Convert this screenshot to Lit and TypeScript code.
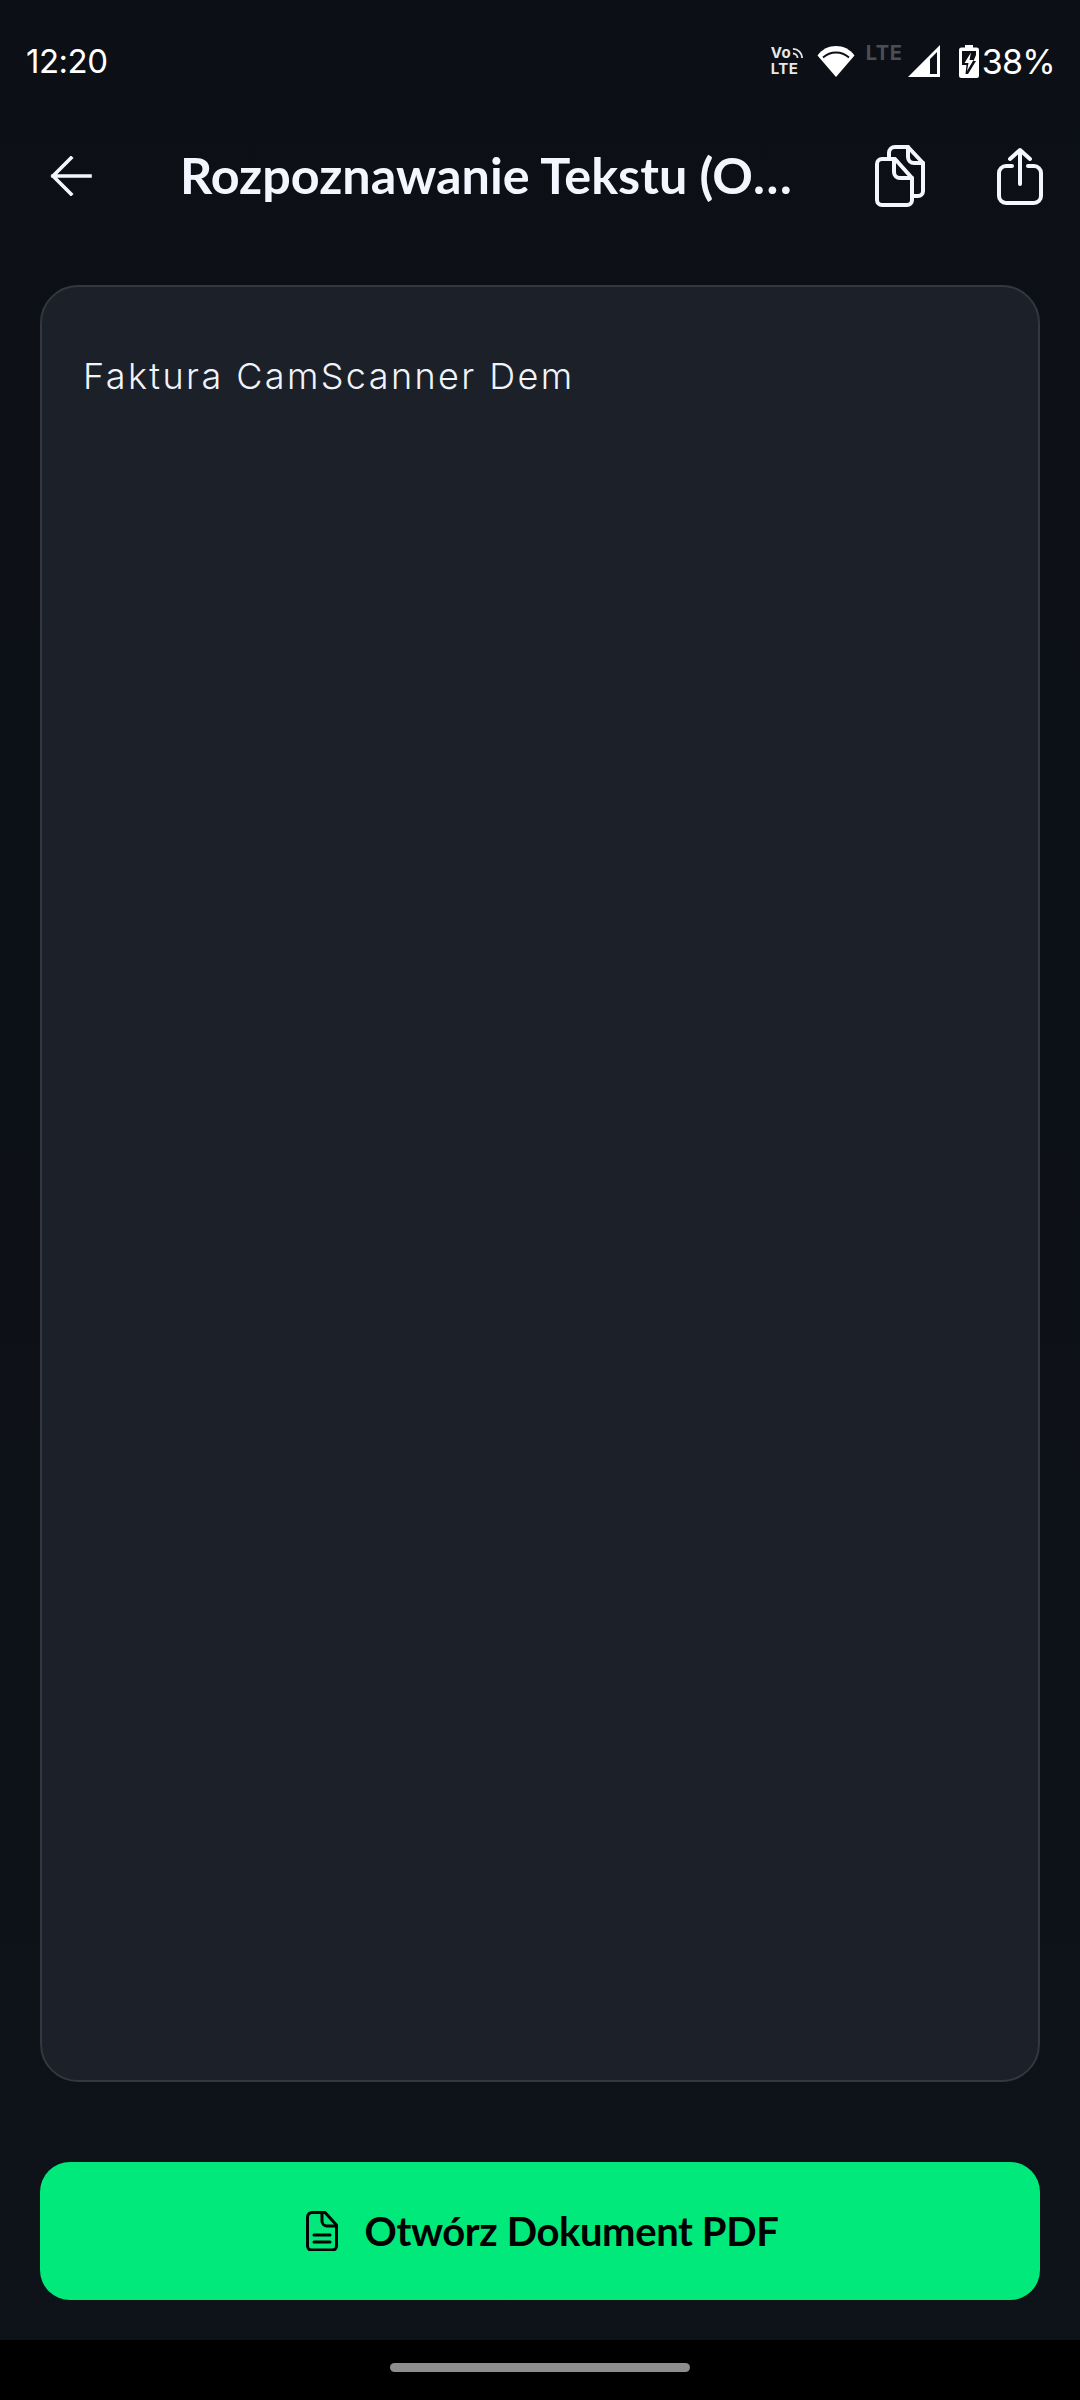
import { LitElement, html, css } from "lit";
import { customElement } from "lit/decorators.js";

@customElement("app-root")
export class AppRoot extends LitElement {
  static styles = css`
    :host { display: block; width: 1080px; height: 2400px; overflow: hidden; font-family: "Lato", "Liberation Sans", sans-serif; }
    .page { width: 1080px; height: 2400px; display: flex; flex-direction: column; background: linear-gradient(#0c0f16, #0e1219); color: #f3f6ff; box-sizing: border-box; }
    .status { height: 122px; flex: none; display: flex; align-items: center; justify-content: space-between; padding: 0 25px 0 26px; box-sizing: border-box; color: #fff; }
    .time { font-family: "Inter", sans-serif; font-size: 33px; font-weight: 400; letter-spacing: -0.5px; line-height: 1; }
    .pct { font-family: "Inter", sans-serif; font-size: 34px; font-weight: 400; letter-spacing: -0.7px; line-height: 33px; }
    .icons { display: flex; align-items: flex-start; height: 33px; }
    .icons svg { display: block; flex: none; }
    .volte { width: 35px; margin-right: 11px; display: flex; flex-direction: column; align-items: flex-start; font-family: "Inter", sans-serif; font-size: 15px; font-weight: 700; line-height: 16px; color: #e8e8e8; letter-spacing: 0.5px; }
    .vo { display: flex; align-items: center; gap: 1px; }
    .lte { width: 36px; margin: 0 6px 0 11px; font-family: "Inter", sans-serif; font-size: 20px; font-weight: 700; line-height: 17px; color: #4c4e53; letter-spacing: 0.6px; }
    .batt { margin: 0 3px 0 19px; }
    .header { height: 108px; flex: none; display: flex; align-items: center; padding: 0 36px 0 50px; box-sizing: border-box; }
    .back { margin-right: 88px; }
    .header svg { display: block; flex: none; }
    .title { width: 625px; flex: none; font-size: 50.300px; font-weight: 700; line-height: 60px; padding-bottom: 2px; white-space: nowrap; overflow: hidden; text-overflow: ellipsis; }
    .copy { margin-left: 70px; margin-right: 72px; }
    .card { height: 1797px; margin: 55px 40px 0; flex: none; box-sizing: border-box; background: #1c2029; border: 2px solid #33373f; border-radius: 38px; padding: 63px 41px; font-family: "Inter", sans-serif; font-size: 36px; line-height: 52px; letter-spacing: 2.4px; color: #f0f3fa; font-weight: 300; }
    .btn { height: 138px; margin: 80px 40px 0; flex: none; display: flex; align-items: center; justify-content: center; gap: 27px; padding-left: 4px; background: #00e97a; border-radius: 30px; color: #000; font-size: 40px; font-weight: 700; letter-spacing: -0.4px; }
    .btn svg { display: block; }
    .nav { margin-top: 40px; height: 60px; flex: none; background: #000; display: flex; justify-content: center; align-items: center; }
    .pill { width: 300px; height: 9px; border-radius: 5px; background: #8e8e8e; margin-top: -6px; }
  `;

  render() {
    return html`<div class="page">
      <div class="status">
        <div class="time">12:20</div>
        <div class="icons">
          <div class="volte">
            <div class="vo">Vo<svg width="12" height="12" viewBox="0 0 13 13" fill="none" stroke="#e8e8e8" stroke-width="2"><path d="M1 2a10 10 0 0 1 10 10M1 7a5 5 0 0 1 5 5"/></svg></div>
            <div>LTE</div>
          </div>
          <svg width="38" height="32" viewBox="0 0 38 32"><path fill="#fff" d="M19 32 0.500 10.500C5 4 12 1 19 1s14 3 18.500 9.500z"/><path fill="none" stroke="#0c0f16" stroke-width="1.800" d="M6 12.500C10 9 14.500 7.500 19 7.500s9 1.500 13 5"/></svg>
          <div class="lte">LTE</div>
          <svg width="32" height="32" viewBox="0 0 32 32"><path fill="#fff" fill-rule="evenodd" d="M32 0v32H0zM29 7 22 14v15h7z"/></svg>
          <svg class="batt" width="20" height="33" viewBox="0 0 20 33">
            <path fill="#fff" d="M6 0h8v2.500h3.500A2.500 2.500 0 0 1 20 5v25.500a2.500 2.500 0 0 1-2.500 2.500h-15A2.500 2.500 0 0 1 0 30.500V5a2.500 2.500 0 0 1 2.500-2.500H6z"/>
            <path fill="#0c0f16" d="M3 6h14v4l-2.500 6H17L9 29H6.500l1-9H3z"/>
            <path fill="#fff" d="M12 7.500 5.500 18h4l-1.500 8 6.500-11h-4z"/>
          </svg>
          <div class="pct">38%</div>
        </div>
      </div>
      <div class="header">
        <svg class="back" width="42" height="40" viewBox="0 0 42 40" fill="none" stroke="#f3f6ff" stroke-width="3.600" stroke-linecap="square"><path d="M21 2 3 20l18 18M3 20h37"/></svg>
        <div class="title">Rozpoznawanie Tekstu (OCR)</div>
        <svg class="copy" width="50" height="62" viewBox="0 0 50 62" fill="none" stroke="#f3f6ff" stroke-width="4" stroke-linejoin="round" stroke-linecap="round">
          <path d="M14 13V8a6 6 0 0 1 6-6h13l15 16v28a5 5 0 0 1-5 5h-6"/>
          <path d="M33 2v10a6 6 0 0 0 6 6h9"/>
          <path d="M7 14h13l17 19v22a5 5 0 0 1-5 5H7a5 5 0 0 1-5-5V19a5 5 0 0 1 5-5z"/>
          <path d="M19 14v13a6 6 0 0 0 6 6h12"/>
        </svg>
        <svg class="share" width="46" height="58" viewBox="0 0 46 58" fill="none" stroke="#f3f6ff" stroke-width="4" stroke-linejoin="round" stroke-linecap="round">
          <path d="M15 19H9a7 7 0 0 0-7 7v23a7 7 0 0 0 7 7h28a7 7 0 0 0 7-7V26a7 7 0 0 0-7-7h-6"/>
          <path d="M23 37V3M13 12l10-9 10 9"/>
        </svg>
      </div>
      <div class="card">Faktura CamScanner Dem</div>
      <div class="btn">
        <svg width="32" height="40" viewBox="0 0 32 40" fill="none" stroke="#000" stroke-width="3" stroke-linejoin="round" stroke-linecap="round">
          <path d="M6 1.500h13L30.500 14v21a4 4 0 0 1-4 4H5.500a4 4 0 0 1-4-4V6a4.500 4.500 0 0 1 4.500-4.500z"/>
          <path d="M16 2v8a5 5 0 0 0 5 5h9M8 24h16M8 31h16"/>
        </svg>
        <span>Otwórz Dokument PDF</span>
      </div>
      <div class="nav"><div class="pill"></div></div>
    </div>`;
  }
}
